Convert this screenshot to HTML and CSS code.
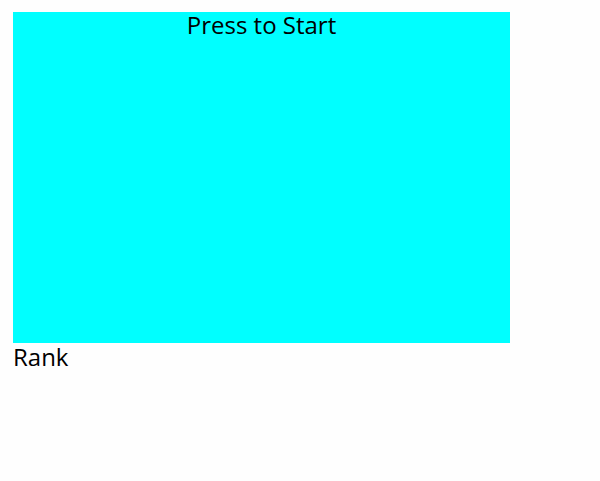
FILE: index.html
```html
<!DOCTYPE html>
<html>
<head>
<meta charset="utf-8">
<link rel="stylesheet" href="styles.css">
</head>
<body>
<div class="stage">
  <div class="title">Press to Start</div>
</div>
<div class="rank">Rank</div>
</body>
</html>
```

FILE: styles.css
```css
html, body {
  margin: 0;
  background: #fefefe;
}
body {
  padding: 12px 13px;
  font-family: "Open Sans", sans-serif;
  color: #000;
}
.stage {
  width: 497px;
  height: 331px;
  background: #00ffff;
  display: flex;
  flex-direction: column;
  align-items: center;
}
.title {
  font-size: 24px;
  line-height: 26px;
}
.rank {
  font-size: 24px;
  line-height: 28px;
}
```
